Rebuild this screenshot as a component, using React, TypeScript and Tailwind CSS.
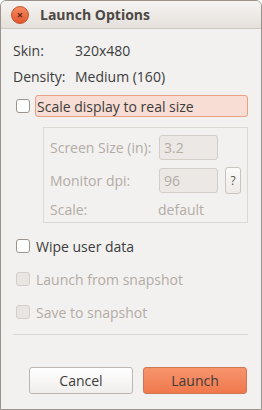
import React, { FC } from "react";

const Check: FC<{ disabled?: boolean }> = ({ disabled }) => (
  <span
    className={`inline-block w-[14px] h-[14px] rounded-[3px] border ${
      disabled ? "bg-[#e8e5e2] border-[#d3cec9]" : "bg-white border-[#9b948d]"
    }`}
  />
);

const App: FC = () => {
  const font = { fontFamily: '"Open Sans", "Noto Sans", sans-serif' };

  return (
    <div
      className="w-[262px] h-[410px] bg-[#f2f1f0] border border-[#9a948d] rounded-t-[6px] flex flex-col text-[14px] text-[#3c3c3c] overflow-hidden"
      style={font}
    >
      {/* Title bar */}
      <div className="h-[28px] flex items-center bg-gradient-to-b from-[#f6f4f2] to-[#e4e0db] border-b border-[#cdc8c2] shrink-0">
        <div className="ml-[10px] w-[18px] h-[18px] rounded-full bg-gradient-to-b from-[#f88b63] to-[#e2552b] border border-[#c4512d] flex items-center justify-center">
          <span className="text-[11px] leading-none text-[#5a2515] font-bold">×</span>
        </div>
        <span className="ml-[11px] text-[14px] font-bold text-[#4c4844]">Launch Options</span>
      </div>

      <div className="flex flex-col pl-[12px] pr-[13px]">
        {/* Info */}
        <div className="mt-[13px] grid grid-cols-[62px_1fr] leading-[18px]">
          <span>Skin:</span>
          <span>320x480</span>
        </div>
        <div className="mt-[8px] grid grid-cols-[62px_1fr] leading-[18px]">
          <span>Density:</span>
          <span>Medium (160)</span>
        </div>

        {/* Scale checkbox */}
        <div className="mt-[9px] flex items-center h-[22px]">
          <span className="ml-[3px] flex">
            <Check />
          </span>
          <span className="ml-[5px] flex-1 h-[22px] flex items-center pl-[1px] bg-[#f7ddd3] border border-[#eb9f85] rounded-[3px]">
            Scale display to real size
          </span>
        </div>

        {/* Scale frame */}
        <div className="mt-[10px] ml-[30px] h-[96px] border border-[#dcd8d3] pl-[6px] pt-[7px] text-[#b3aca5]">
          <div className="flex items-center h-[25px]">
            <span className="w-[109px]">Screen Size (in):</span>
            <span className="w-[59px] h-[25px] rounded-[3px] border border-[#d2cdc7] bg-[#ebe8e5] flex items-center pl-[4px]">
              3.2
            </span>
          </div>
          <div className="mt-[8px] flex items-center h-[25px]">
            <span className="w-[109px]">Monitor dpi:</span>
            <span className="w-[59px] h-[25px] rounded-[3px] border border-[#d2cdc7] bg-[#ebe8e5] flex items-center pl-[4px]">
              96
            </span>
            <span className="ml-[7px] w-[16px] h-[27px] rounded-[3px] border border-[#c9c4be] bg-gradient-to-b from-[#fbfaf9] to-[#eeebe8] flex items-center justify-center text-[12px] text-[#5b5650]">
              ?
            </span>
          </div>
          <div className="mt-[7px] flex items-center h-[18px]">
            <span className="w-[108px]">Scale:</span>
            <span>default</span>
          </div>
        </div>

        {/* Options */}
        <div className="mt-[14px] flex items-center h-[18px]">
          <span className="ml-[3px] flex">
            <Check />
          </span>
          <span className="ml-[6px]">Wipe user data</span>
        </div>
        <div className="mt-[15px] flex items-center h-[18px] text-[#b3aca5]">
          <span className="ml-[3px] flex">
            <Check disabled />
          </span>
          <span className="ml-[6px]">Launch from snapshot</span>
        </div>
        <div className="mt-[15px] flex items-center h-[18px] text-[#b3aca5]">
          <span className="ml-[3px] flex">
            <Check disabled />
          </span>
          <span className="ml-[6px]">Save to snapshot</span>
        </div>

        <div className="mt-[13px] h-px bg-[#dcd8d3]" />

        {/* Buttons */}
        <div className="mt-[32px] flex justify-end gap-[10px] pr-[1px]">
          <button className="w-[104px] h-[27px] rounded-[3px] border border-[#bdb7b0] bg-gradient-to-b from-[#ffffff] to-[#f0eeec] text-[14px] text-[#3c3c3c]">
            Cancel
          </button>
          <button className="w-[104px] h-[27px] rounded-[3px] border border-[#cd7754] bg-gradient-to-b from-[#f7946d] to-[#f0784b] text-[14px] text-[#3c3c3c]">
            Launch
          </button>
        </div>
      </div>
    </div>
  );
};

export default App;
